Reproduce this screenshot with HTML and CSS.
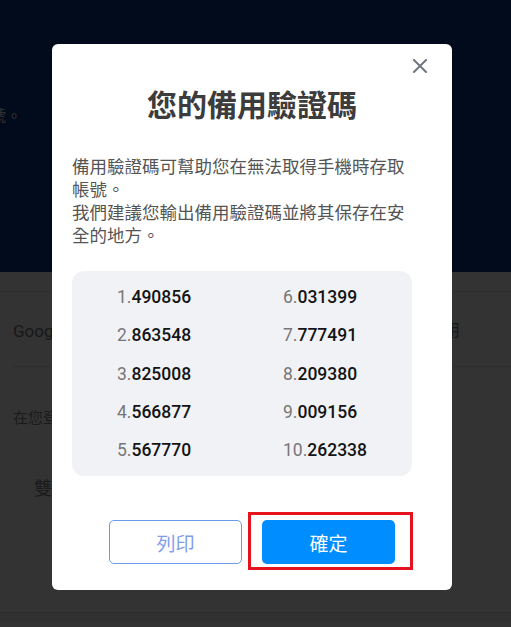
FILE: index.html
```html
<!DOCTYPE html>
<html lang="zh-Hant">
<head>
<meta charset="utf-8">
<title>備用驗證碼</title>
<link rel="stylesheet" href="styles.css">
</head>
<body>
<div class="page">
  <header class="hero">
    <p class="hero-text">號。</p>
  </header>
  <section class="settings">
    <div class="settings-tabs"></div>
    <div class="settings-row">
      <span class="row-title">Google 驗證器</span>
      <span class="row-action">啟用</span>
    </div>
    <p class="settings-note">在您登入時需要輸入驗證碼</p>
    <p class="settings-sub">雙重驗證</p>
    <div class="settings-foot"></div>
  </section>
</div>

<div class="overlay">
  <div class="modal" role="dialog" aria-labelledby="modal-title">
    <button class="modal-close" aria-label="關閉">
      <svg width="14" height="14" viewBox="0 0 14 14"><path d="M1 1L13 13M13 1L1 13" stroke="#6e7781" stroke-width="2" stroke-linecap="square" fill="none"/></svg>
    </button>
    <h2 class="modal-title" id="modal-title">您的備用驗證碼</h2>
    <p class="modal-desc">備用驗證碼可幫助您在無法取得手機時存取帳號。<br>我們建議您輸出備用驗證碼並將其保存在安全的地方。</p>
    <ul class="codes">
      <li class="code"><span class="code-idx">1.</span>490856</li>
      <li class="code"><span class="code-idx">6.</span>031399</li>
      <li class="code"><span class="code-idx">2.</span>863548</li>
      <li class="code"><span class="code-idx">7.</span>777491</li>
      <li class="code"><span class="code-idx">3.</span>825008</li>
      <li class="code"><span class="code-idx">8.</span>209380</li>
      <li class="code"><span class="code-idx">4.</span>566877</li>
      <li class="code"><span class="code-idx">9.</span>009156</li>
      <li class="code"><span class="code-idx">5.</span>567770</li>
      <li class="code"><span class="code-idx">10.</span>262338</li>
    </ul>
    <div class="modal-actions">
      <button class="btn btn-outline">列印</button>
      <span class="highlight"><button class="btn btn-primary">確定</button></span>
    </div>
  </div>
</div>
</body>
</html>
```

FILE: styles.css
```css
* { box-sizing: border-box; }

html, body {
  margin: 0;
  padding: 0;
}

body {
  width: 511px;
  height: 627px;
  overflow: hidden;
  background: #ffffff;
  font-family: Roboto, "Noto Sans CJK TC", "Noto Sans", sans-serif;
}

.page {
  display: flex;
  flex-direction: column;
}

.hero {
  height: 272px;
  background: #05378c;
  padding-top: 103px;
}

.hero-text {
  margin: 0 0 0 -10px;
  font-family: "Noto Sans CJK TC", sans-serif;
  font-size: 16px;
  line-height: 24px;
  color: #eef0f5;
}

.settings {
  display: flex;
  flex-direction: column;
  background: #ffffff;
}

.settings-tabs {
  height: 20px;
  border-bottom: 1px solid #e2e2e2;
}

.settings-row {
  margin-left: 13px;
  height: 75px;
  display: flex;
  align-items: center;
  justify-content: space-between;
  padding-right: 51px;
  border-bottom: 1px solid #e2e2e2;
  color: #777;
  font-size: 17px;
}

.row-action {
  font-family: "Noto Sans CJK TC", sans-serif;
  font-size: 16px;
}

.settings-note {
  margin: 38px 0 0 13px;
  font-family: "Noto Sans CJK TC", sans-serif;
  font-size: 15px;
  line-height: 24px;
  color: #888;
}

.settings-sub {
  margin: 45px 0 0 34px;
  font-family: "Noto Sans CJK TC", sans-serif;
  font-size: 18px;
  line-height: 26px;
  color: #888;
}

.settings-foot {
  margin-top: 112px;
  height: 10px;
  border-top: 1px solid #e2e2e2;
  background: #f6f6f6;
}

.overlay {
  position: fixed;
  inset: 0;
  background: rgba(0, 0, 0, 0.8);
  display: flex;
  justify-content: center;
  align-items: flex-start;
  padding-top: 44px;
  padding-right: 7px;
}

.modal {
  position: relative;
  width: 400px;
  background: #ffffff;
  border-radius: 6px;
  padding: 39px 20px 26px;
}

.modal-close {
  position: absolute;
  top: 10px;
  right: 20px;
  width: 24px;
  height: 24px;
  padding: 0;
  border: 0;
  background: none;
  display: flex;
  align-items: center;
  justify-content: center;
}

.modal-title {
  margin: 0;
  text-align: center;
  font-family: "Noto Sans CJK TC", sans-serif;
  font-size: 30px;
  line-height: 40px;
  font-weight: 700;
  color: #3c3c3c;
}

.modal-desc {
  width: 340px;
  margin: 31px 0 0;
  font-family: "Noto Sans CJK TC", sans-serif;
  font-size: 17.5px;
  line-height: 23px;
  color: #555555;
}

.codes {
  width: 340px;
  list-style: none;
  margin: 25px 0 0;
  padding: 7px 0 7px 45px;
  background: #f1f2f6;
  border-radius: 12px;
  display: grid;
  grid-template-columns: 166px 1fr;
}

.code {
  height: 38.3px;
  line-height: 38.3px;
  font-family: Roboto, sans-serif;
  font-size: 17.5px;
  font-weight: 500;
  color: #141414;
}

.code-idx {
  font-weight: 400;
  color: #777777;
}

.modal-actions {
  margin-top: 44px;
  display: flex;
  justify-content: center;
  gap: 20px;
}

.btn {
  width: 133px;
  height: 44px;
  border-radius: 5px;
  font-family: "Noto Sans CJK TC", sans-serif;
  font-size: 19px;
  padding: 0;
}

.btn-outline {
  background: #ffffff;
  border: 1px solid #6a9de8;
  color: #7f9de9;
}

.btn-primary {
  display: block;
  background: #008dff;
  border: 0;
  color: #ffffff;
}

.highlight {
  position: relative;
  display: block;
}

.highlight::after {
  content: "";
  position: absolute;
  top: -8px;
  left: -14px;
  right: -18px;
  bottom: -6px;
  border: 3px solid #e5131d;
  pointer-events: none;
}
```
